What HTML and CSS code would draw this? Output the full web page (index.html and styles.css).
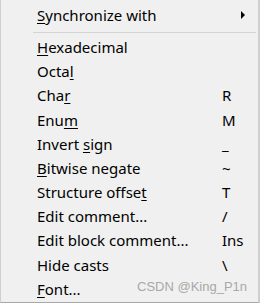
FILE: index.html
```html
<!DOCTYPE html>
<html lang="en">
<head>
    <meta charset="UTF-8">
    <title>Context menu</title>
    <link rel="stylesheet" href="styles.css">
</head>
<body>
    <div class="menu">
        <div class="item has-sub">
            <span class="label"><u>S</u>ynchronize with</span>
            <span class="arrow"></span>
        </div>
        <div class="sep"></div>
        <div class="item"><span class="label"><u>H</u>exadecimal</span></div>
        <div class="item"><span class="label">Octa<u>l</u></span></div>
        <div class="item"><span class="label">Cha<u>r</u></span><span class="key">R</span></div>
        <div class="item"><span class="label">Enu<u>m</u></span><span class="key">M</span></div>
        <div class="item"><span class="label">Invert <u>s</u>ign</span><span class="key">_</span></div>
        <div class="item"><span class="label"><u>B</u>itwise negate</span><span class="key">~</span></div>
        <div class="item"><span class="label">Structure offse<u>t</u></span><span class="key">T</span></div>
        <div class="item"><span class="label">Edit comment...</span><span class="key">/</span></div>
        <div class="item"><span class="label">Edit block comment...</span><span class="key">Ins</span></div>
        <div class="item"><span class="label">Hide casts</span><span class="key">\</span></div>
        <div class="item"><span class="label"><u>F</u>ont...</span></div>
        <div class="watermark">CSDN @King_P1n</div>
    </div>
</body>
</html>
```

FILE: styles.css
```css
body {
    margin: 0;
    background: #ffffff;
}
.menu {
    position: relative;
    width: 260px;
    height: 303px;
    box-sizing: border-box;
    background-color: #f0f0f0;
    border-left: 1px solid #cfcfcf;
    border-right: 2px solid #cfcfcf;
    border-bottom: 1px solid #a8a8a8;
    padding-top: 3px;
    font-family: 'Noto Sans', sans-serif;
    font-size: 15px;
    color: #000;
}
.item {
    display: grid;
    grid-template-columns: 185px 1fr;
    height: 24.2px;
    line-height: 24.2px;
    padding-left: 36px;
}
.item u {
    text-underline-offset: 2px;
}
.has-sub {
    position: relative;
}
.arrow {
    position: absolute;
    left: 240px;
    top: 8px;
    width: 0;
    height: 0;
    border-top: 4px solid transparent;
    border-bottom: 4px solid transparent;
    border-left: 4px solid #000;
}
.sep {
    height: 1px;
    background-color: #d4d4d4;
    margin: 4.4px 0 2.4px 32px;
    width: 223px;
}
.watermark {
    position: absolute;
    left: 136px;
    top: 279px;
    font-family: 'Liberation Sans', sans-serif;
    font-size: 13px;
    color: #a8a8a8;
}
```
